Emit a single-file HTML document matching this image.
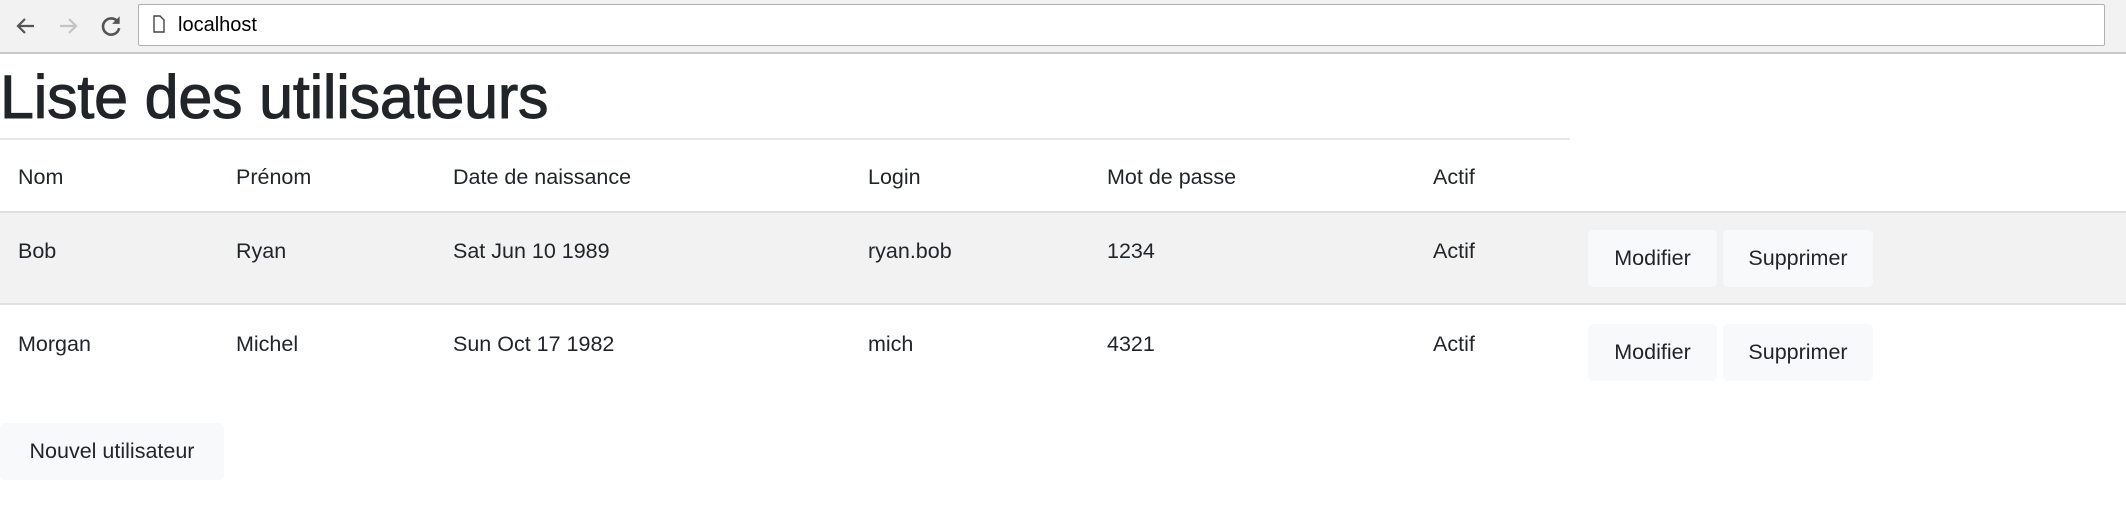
<!DOCTYPE html>
<html><head><meta charset="utf-8"><style>
*{margin:0;padding:0;box-sizing:border-box}
body{width:2126px;height:508px;overflow:hidden;background:#fff;font-family:"Liberation Sans",sans-serif;color:#212529;position:relative}
.bar{position:absolute;left:0;top:0;width:2126px;height:54px;background:#f2f2f2;border-bottom:2px solid #c8c8c8}
.url{position:absolute;left:138px;top:4px;width:1967px;height:42px;background:#fff;border:1px solid #b0b0b0;border-radius:2px}
.url span{position:absolute;left:39px;top:9px;font-size:20px;color:#000}
.ab{position:absolute}
h1{position:absolute;left:0;top:59px;font-size:61px;font-weight:normal;-webkit-text-stroke:1px #212529;letter-spacing:-0.2px;line-height:76px}
.hr{position:absolute;left:0;top:138px;width:1570px;height:2px;background:#e6e6e6}
.t{position:absolute;font-size:21.5px;line-height:26px}
.row1{position:absolute;left:0;top:211px;width:2126px;height:94px;background:#f2f2f2;border-top:2px solid #e0e0e0;border-bottom:2px solid #e0e0e0}
.btn{position:absolute;background:#f8f9fa;border-radius:5px;font-size:21.5px;display:flex;align-items:center;justify-content:center}
</style></head><body>
<div class="bar">
<svg class="ab" style="left:14px;top:14px" width="24" height="24" viewBox="0 0 24 24"><path d="M20 12H5M11 5l-7 7 7 7" stroke="#555" stroke-width="2.2" fill="none"/></svg>
<svg class="ab" style="left:56px;top:14px" width="24" height="24" viewBox="0 0 24 24"><path d="M4 12h15M13 5l7 7-7 7" stroke="#c4c4c4" stroke-width="2.2" fill="none"/></svg>
<svg class="ab" style="left:98px;top:13px" width="26" height="26" viewBox="0 0 24 24"><path d="M18.5 8.5A7.5 7.5 0 1 0 19.5 14" stroke="#555" stroke-width="2.4" fill="none"/><path d="M20 3v7h-7z" fill="#555"/></svg>
<div class="url"><svg class="ab" style="left:14px;top:10px" width="12" height="18" viewBox="0 0 12 18"><path d="M1 1h6l4 4v12H1z" stroke="#444" stroke-width="1.4" fill="none"/></svg><span>localhost</span></div>
</div>
<h1>Liste des utilisateurs</h1>
<div class="hr"></div>
<div class="row1"></div>
<div class="t" style="left:18px;top:164px">Nom</div>
<div class="t" style="left:236px;top:164px">Prénom</div>
<div class="t" style="left:453px;top:164px">Date de naissance</div>
<div class="t" style="left:868px;top:164px">Login</div>
<div class="t" style="left:1107px;top:164px">Mot de passe</div>
<div class="t" style="left:1433px;top:164px">Actif</div>

<div class="t" style="left:18px;top:238px">Bob</div>
<div class="t" style="left:236px;top:238px">Ryan</div>
<div class="t" style="left:453px;top:238px">Sat Jun 10 1989</div>
<div class="t" style="left:868px;top:238px">ryan.bob</div>
<div class="t" style="left:1107px;top:238px">1234</div>
<div class="t" style="left:1433px;top:238px">Actif</div>
<div class="btn" style="left:1588px;top:230px;width:129px;height:57px">Modifier</div>
<div class="btn" style="left:1723px;top:230px;width:150px;height:57px">Supprimer</div>

<div class="t" style="left:18px;top:331px">Morgan</div>
<div class="t" style="left:236px;top:331px">Michel</div>
<div class="t" style="left:453px;top:331px">Sun Oct 17 1982</div>
<div class="t" style="left:868px;top:331px">mich</div>
<div class="t" style="left:1107px;top:331px">4321</div>
<div class="t" style="left:1433px;top:331px">Actif</div>
<div class="btn" style="left:1588px;top:324px;width:129px;height:57px">Modifier</div>
<div class="btn" style="left:1723px;top:324px;width:150px;height:57px">Supprimer</div>

<div class="btn" style="left:0;top:423px;width:224px;height:57px">Nouvel utilisateur</div>
</body></html>
